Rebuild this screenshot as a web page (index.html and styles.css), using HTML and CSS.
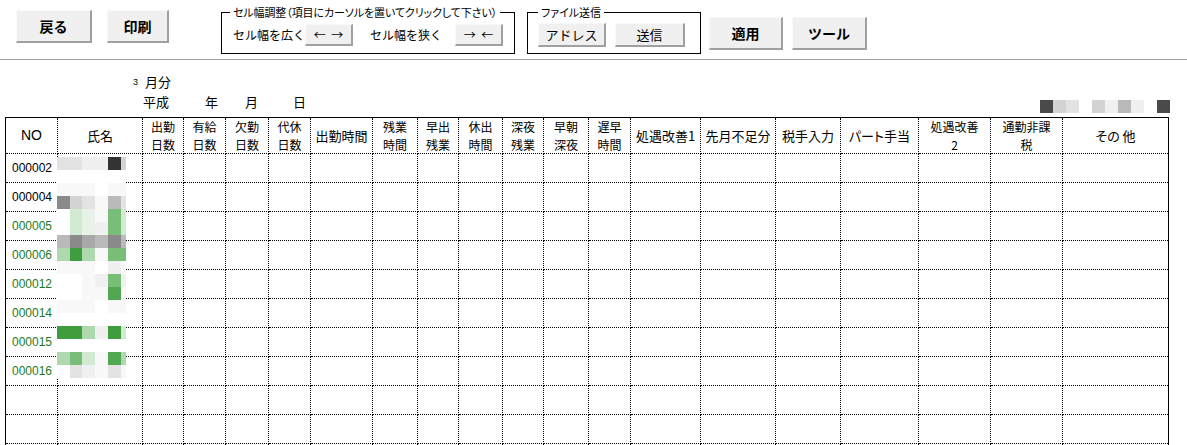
FILE: index.html
```html
<!DOCTYPE html>
<html lang="ja">
<head>
<meta charset="utf-8">
<title>勤怠入力</title>
<link rel="stylesheet" href="styles.css">
</head>
<body>
<div class="toolbar">
  <button class="btn btn-main btn-back">戻る</button>
  <button class="btn btn-main btn-print">印刷</button>
  <fieldset class="group group-cell">
    <legend>セル幅調整（項目にカーソルを置いてクリックして下さい）</legend>
    <div class="group-row">
      <span class="glabel glabel-1">セル幅を広く</span>
      <button class="btn btn-arrow">←&nbsp;&nbsp;→</button>
      <span class="glabel glabel-2">セル幅を狭く</span>
      <button class="btn btn-arrow">→&nbsp;&nbsp;←</button>
    </div>
  </fieldset>
  <fieldset class="group group-file">
    <legend>ファイル送信</legend>
    <div class="group-row">
      <button class="btn btn-sub btn-addr">アドレス</button>
      <button class="btn btn-sub btn-send">送信</button>
    </div>
  </fieldset>
  <button class="btn btn-main btn-apply">適用</button>
  <button class="btn btn-main btn-tool">ツール</button>
</div>

<div class="meta">
  <div class="meta-month"><span class="meta-num">3</span><span>月分</span></div>
  <div class="meta-date">
    <span>平成</span><span class="d-y">年</span><span class="d-m">月</span><span class="d-d">日</span>
    <div class="strip">
      <i class="d"></i><i class="g2"></i><i class="g1"></i><i class="w"></i><i class="g2"></i><i class="g0"></i><i class="g3"></i><i class="g0"></i><i class="w"></i><i class="d"></i>
    </div>
  </div>
</div>

<div class="sheet">
  <table class="grid">
    <colgroup>
      <col class="c52"><col class="c85"><col class="c41"><col class="c42"><col class="c43"><col class="c42"><col class="c62"><col class="c45"><col class="c41"><col class="c44"><col class="c41"><col class="c45"><col class="c42"><col class="c70"><col class="c75"><col class="c65"><col class="c78"><col class="c72"><col class="c72"><col class="c106">
    </colgroup>
    <thead>
      <tr class="head">
        <th class="no-head">NO</th><th>氏名</th><th class="two">出勤<br>日数</th><th class="two">有給<br>日数</th><th class="two">欠勤<br>日数</th><th class="two">代休<br>日数</th><th>出勤時間</th><th class="two">残業<br>時間</th><th class="two">早出<br>残業</th><th class="two">休出<br>時間</th><th class="two">深夜<br>残業</th><th class="two">早朝<br>深夜</th><th class="two">遅早<br>時間</th><th>処遇改善1</th><th>先月不足分</th><th>税手入力</th><th>パート手当</th><th class="two">処遇改善<br>2</th><th class="two">通勤非課<br>税</th><th>その 他</th>
      </tr>
    </thead>
    <tbody>
      <tr class="row"><td class="no">000002</td><td></td><td></td><td></td><td></td><td></td><td></td><td></td><td></td><td></td><td></td><td></td><td></td><td></td><td></td><td></td><td></td><td></td><td></td><td></td></tr>
      <tr class="row"><td class="no">000004</td><td></td><td></td><td></td><td></td><td></td><td></td><td></td><td></td><td></td><td></td><td></td><td></td><td></td><td></td><td></td><td></td><td></td><td></td><td></td></tr>
      <tr class="row"><td class="no green">000005</td><td></td><td></td><td></td><td></td><td></td><td></td><td></td><td></td><td></td><td></td><td></td><td></td><td></td><td></td><td></td><td></td><td></td><td></td><td></td></tr>
      <tr class="row"><td class="no green">000006</td><td></td><td></td><td></td><td></td><td></td><td></td><td></td><td></td><td></td><td></td><td></td><td></td><td></td><td></td><td></td><td></td><td></td><td></td><td></td></tr>
      <tr class="row"><td class="no green">000012</td><td></td><td></td><td></td><td></td><td></td><td></td><td></td><td></td><td></td><td></td><td></td><td></td><td></td><td></td><td></td><td></td><td></td><td></td><td></td></tr>
      <tr class="row"><td class="no green">000014</td><td></td><td></td><td></td><td></td><td></td><td></td><td></td><td></td><td></td><td></td><td></td><td></td><td></td><td></td><td></td><td></td><td></td><td></td><td></td></tr>
      <tr class="row"><td class="no green">000015</td><td></td><td></td><td></td><td></td><td></td><td></td><td></td><td></td><td></td><td></td><td></td><td></td><td></td><td></td><td></td><td></td><td></td><td></td><td></td></tr>
      <tr class="row"><td class="no green">000016</td><td></td><td></td><td></td><td></td><td></td><td></td><td></td><td></td><td></td><td></td><td></td><td></td><td></td><td></td><td></td><td></td><td></td><td></td><td></td></tr>
      <tr class="row"><td class="no"></td><td></td><td></td><td></td><td></td><td></td><td></td><td></td><td></td><td></td><td></td><td></td><td></td><td></td><td></td><td></td><td></td><td></td><td></td><td></td></tr>
      <tr class="row"><td class="no"></td><td></td><td></td><td></td><td></td><td></td><td></td><td></td><td></td><td></td><td></td><td></td><td></td><td></td><td></td><td></td><td></td><td></td><td></td><td></td></tr>
      <tr class="row"><td class="no"></td><td></td><td></td><td></td><td></td><td></td><td></td><td></td><td></td><td></td><td></td><td></td><td></td><td></td><td></td><td></td><td></td><td></td><td></td><td></td></tr>
    </tbody>
  </table>

  <div class="mosaic" aria-hidden="true">
    <i class="g1"></i><i class="g1"></i><i class="g0"></i><i class="g0"></i><i class="k"></i><i class="g2"></i>
    <i class="w"></i><i class="w"></i><i class="w"></i><i class="w"></i><i class="w"></i><i class="w"></i>
    <i class="f"></i><i class="f"></i><i class="f"></i><i class="w"></i><i class="f"></i><i class="f"></i>
    <i class="g5"></i><i class="g2"></i><i class="g1"></i><i class="f"></i><i class="g3"></i><i class="g1"></i>
    <i class="w"></i><i class="n0"></i><i class="e"></i><i class="f"></i><i class="n2"></i><i class="n0"></i>
    <i class="w"></i><i class="n0"></i><i class="e"></i><i class="g0"></i><i class="n2"></i><i class="n0"></i>
    <i class="g3"></i><i class="g5"></i><i class="g4"></i><i class="g3"></i><i class="g5"></i><i class="g3"></i>
    <i class="n1"></i><i class="n4"></i><i class="n1"></i><i class="f"></i><i class="n2"></i><i class="n2"></i>
    <i class="f"></i><i class="f"></i><i class="f"></i><i class="w"></i><i class="g0"></i><i class="f"></i>
    <i class="w"></i><i class="w"></i><i class="f"></i><i class="g0"></i><i class="n2"></i><i class="g0"></i>
    <i class="w"></i><i class="w"></i><i class="f"></i><i class="f"></i><i class="n3"></i><i class="f"></i>
    <i class="f"></i><i class="f"></i><i class="f"></i><i class="w"></i><i class="f"></i><i class="f"></i>
    <i class="w"></i><i class="w"></i><i class="w"></i><i class="w"></i><i class="w"></i><i class="w"></i>
    <i class="n4"></i><i class="n4"></i><i class="n1"></i><i class="g0"></i><i class="n4"></i><i class="n0"></i>
    <i class="w"></i><i class="w"></i><i class="w"></i><i class="w"></i><i class="w"></i><i class="w"></i>
    <i class="n1"></i><i class="n2"></i><i class="n0"></i><i class="f"></i><i class="n3"></i><i class="n1"></i>
    <i class="w"></i><i class="g1"></i><i class="g0"></i><i class="f"></i><i class="g1"></i><i class="f"></i>
  </div>
</div>
</body>
</html>
```

FILE: styles.css
```css
* { box-sizing: border-box; }

html, body {
  margin: 0;
  padding: 0;
  background: #fff;
  overflow: hidden;
}

body {
  width: 1187px;
  height: 445px;
  font-family: "Noto Sans CJK JP", "Noto Sans", sans-serif;
  color: #000;
}

/* ---------- toolbar ---------- */
.toolbar {
  display: flex;
  align-items: flex-start;
  height: 60px;
  border-bottom: 1px solid #a0a0a0;
}

.btn {
  font-family: inherit;
  color: #000;
  background: #f0f0f0;
  border-style: solid;
  border-width: 1px 2px 2px 1px;
  border-color: #f8f8f8 #a0a0a0 #a0a0a0 #f8f8f8;
  padding: 0;
  margin: 0;
  line-height: 1;
  cursor: default;
  white-space: nowrap;
}

.btn-main {
  height: 33px;
  margin-top: 10px;
  font-size: 14px;
  font-weight: bold;
}

.btn-back { margin-left: 16px; width: 76px; }
.btn-print { margin-left: 15px; width: 62px; }
.btn-apply { margin-left: 8px; margin-top: 17px; width: 74px; }
.btn-tool { margin-left: 9px; margin-top: 17px; width: 75px; }

.group {
  margin: 5px 0 0 0;
  border: 1px solid #000;
  min-width: 0;
}

.group legend {
  font-size: 11px;
  line-height: 14px;
  padding: 0 3px;
  white-space: nowrap;
  font-feature-settings: "palt";
}

.group-cell legend { letter-spacing: -0.1px; }

.group-cell {
  margin-left: 52px;
  width: 294px;
  padding: 0 11px 7px 8px;
}

.group-file {
  margin-left: 12px;
  width: 174px;
  padding: 0 15px 6px 10px;
}

.group-row {
  display: flex;
  align-items: center;
}

.group-cell .group-row { margin-top: 5px; }
.group-file .group-row { margin-top: 4px; }

.glabel {
  font-size: 12px;
  line-height: 14px;
  white-space: nowrap;
}

.glabel-1 { margin-left: 3px; width: 72px; }
.glabel-2 { margin-left: 17px; width: 85px; }

.btn-arrow {
  width: 48px;
  height: 22px;
  font-size: 12px;
}

.btn-sub {
  height: 24px;
  font-size: 13px;
}

.btn-addr { width: 68px; }
.btn-send { margin-left: 9px; width: 70px; }

/* ---------- period heading ---------- */
.meta {
  padding-top: 13px;
}

.meta-month {
  display: flex;
  align-items: center;
  height: 18px;
  line-height: 18px;
  padding-left: 133px;
  font-size: 13px;
}

.meta-num {
  font-family: "Liberation Sans", sans-serif;
  font-size: 9px;
  margin-right: 7px;
}

.meta-date {
  display: flex;
  height: 20px;
  margin-top: 2px;
  padding-left: 143px;
  font-size: 13px;
  line-height: 18px;
}

.d-y { margin-left: 36px; }
.d-m { margin-left: 27px; }
.d-d { margin-left: 35px; }

.strip {
  display: flex;
  margin-left: auto;
  margin-right: 17px;
  align-self: flex-end;
}

.strip i {
  display: block;
  width: 13px;
  height: 13px;
}

/* ---------- sheet (scrolling area) ---------- */
.sheet {
  position: relative;
  margin: 4px 0 0 5px;
  height: 328px;
  overflow: hidden;
}

.grid {
  border-collapse: collapse;
  table-layout: fixed;
  width: 1164px;
  border: 1px solid #000;
}

.grid th,
.grid td {
  border: 1px dotted #000;
  padding: 0;
}

.c41 { width: 41px; }
.c42 { width: 42px; }
.c43 { width: 43px; }
.c44 { width: 44px; }
.c45 { width: 45px; }
.c52 { width: 52px; }
.c62 { width: 62px; }
.c65 { width: 65px; }
.c70 { width: 70px; }
.c72 { width: 72px; }
.c75 { width: 75px; }
.c78 { width: 78px; }
.c85 { width: 85px; }
.c106 { width: 106px; }

.head { height: 35px; }

.grid th {
  height: 35px;
  font-size: 13px;
  font-weight: normal;
  line-height: 17px;
  text-align: center;
  vertical-align: middle;
  white-space: nowrap;
  overflow: hidden;
  font-feature-settings: "palt";
}

.grid th.two {
  font-size: 12px;
  line-height: 17.5px;
}

.grid th.no-head {
  font-family: "Liberation Sans", sans-serif;
  font-size: 14px;
}

.row { height: 29px; }

.grid td.no {
  font-family: "Liberation Sans", sans-serif;
  font-size: 12px;
  padding-left: 6px;
  vertical-align: middle;
  white-space: nowrap;
}

.grid td.green { color: #1d7a1d; }

/* redaction mosaic over the name column */
.mosaic {
  position: absolute;
  left: 52px;
  top: 40px;
  display: grid;
  grid-template-columns: 13px 12px 13px 13px 13px 5px;
  grid-auto-rows: 13px;
}

.mosaic i { display: block; }

/* mosaic palette */
.k  { background: #333333; }
.d  { background: #4a4a4a; }
.g5 { background: #8a8a8a; }
.g4 { background: #a8a8a8; }
.g3 { background: #bababa; }
.g2 { background: #d3d3d3; }
.g1 { background: #e3e3e3; }
.g0 { background: #f0f0f0; }
.f  { background: #f8f8f8; }
.w  { background: #ffffff; }
.e  { background: #e8f2e8; }
.n0 { background: #d2ead2; }
.n1 { background: #aed8ae; }
.n2 { background: #78bd78; }
.n3 { background: #52a752; }
.n4 { background: #3f9c3f; }
```
